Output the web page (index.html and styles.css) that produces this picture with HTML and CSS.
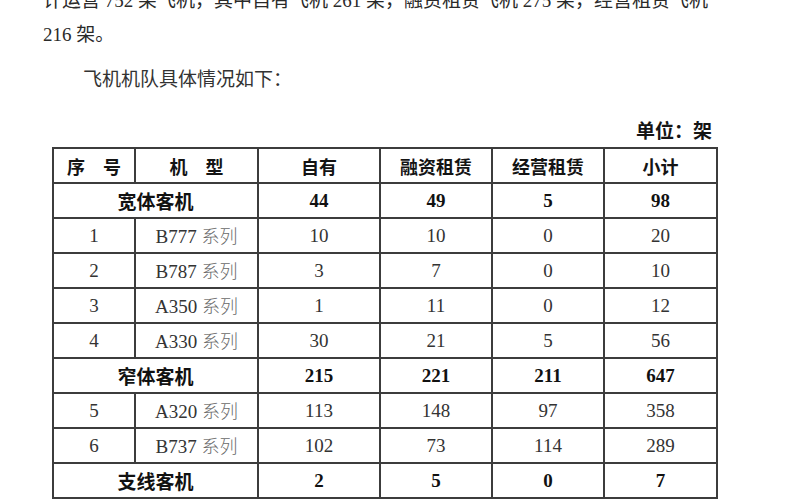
FILE: index.html
```html
<!DOCTYPE html>
<html lang="zh-CN">
<head>
<meta charset="utf-8">
<title>飞机机队具体情况</title>
<link rel="stylesheet" href="styles.css">
</head>
<body>
<div class="page">
  <p class="para intro"><span class="line first">计运营 752 架飞机，其中自有飞机 261 架，融资租赁飞机 275 架，经营租赁飞机</span><span class="line">216 架。</span></p>
  <p class="para indent">飞机机队具体情况如下：</p>
  <p class="unit">单位：架</p>
  <table class="fleet">
    <colgroup>
      <col class="c1"><col class="c2"><col class="c3"><col class="c4"><col class="c5"><col class="c6">
    </colgroup>
    <thead>
      <tr class="head"><th>序　号</th><th>机　型</th><th>自有</th><th>融资租赁</th><th>经营租赁</th><th>小计</th></tr>
    </thead>
    <tbody>
      <tr class="cat"><td colspan="2" class="cjk">宽体客机</td><td>44</td><td>49</td><td>5</td><td>98</td></tr>
      <tr><td>1</td><td>B777 <span class="sr">系列</span></td><td>10</td><td>10</td><td>0</td><td>20</td></tr>
      <tr><td>2</td><td>B787 <span class="sr">系列</span></td><td>3</td><td>7</td><td>0</td><td>10</td></tr>
      <tr><td>3</td><td>A350 <span class="sr">系列</span></td><td>1</td><td>11</td><td>0</td><td>12</td></tr>
      <tr><td>4</td><td>A330 <span class="sr">系列</span></td><td>30</td><td>21</td><td>5</td><td>56</td></tr>
      <tr class="cat"><td colspan="2" class="cjk">窄体客机</td><td>215</td><td>221</td><td>211</td><td>647</td></tr>
      <tr><td>5</td><td>A320 <span class="sr">系列</span></td><td>113</td><td>148</td><td>97</td><td>358</td></tr>
      <tr><td>6</td><td>B737 <span class="sr">系列</span></td><td>102</td><td>73</td><td>114</td><td>289</td></tr>
      <tr class="cat"><td colspan="2" class="cjk">支线客机</td><td>2</td><td>5</td><td>0</td><td>7</td></tr>
    </tbody>
  </table>
</div>
</body>
</html>
```

FILE: styles.css
```css
html, body {
  margin: 0;
  padding: 0;
  background: #ffffff;
}
body {
  width: 800px;
  height: 500px;
  overflow: hidden;
  font-family: "Liberation Serif", "Noto Sans CJK SC", serif;
  color: #2e2e2e;
}
.page {
  padding-left: 43px;
}
.para {
  margin: 0;
  font-size: 19px;
  line-height: 29px;
  color: #2a2a2a;
}
.intro {
  margin-top: -14px;
}
.line {
  display: block;
  white-space: nowrap;
}
.line.first {
  margin-bottom: 5px;
}
.indent {
  margin-top: 16px;
  padding-left: 40px;
  font-size: 19px;
  color: #333;
}
.unit {
  margin: 21px 0 0 0;
  width: 669px;
  text-align: right;
  font-family: "Noto Sans CJK SC", sans-serif;
  font-weight: 700;
  font-size: 19px;
  line-height: 29px;
  color: #151515;
}
.fleet {
  margin-top: 3px;
  margin-left: 9px;
  border-collapse: collapse;
  table-layout: fixed;
  width: 665px;
  font-size: 19px;
}
.c1 { width: 82px; }
.c2 { width: 123px; }
.c3 { width: 122px; }
.c4 { width: 112px; }
.c5 { width: 112px; }
.c6 { width: 113px; }
.fleet tr {
  height: 35px;
}
.fleet th, .fleet td {
  border: 2px solid #3c3c3c;
  padding: 0;
  text-align: center;
  vertical-align: middle;
  line-height: 20px;
}
.fleet th {
  font-family: "Noto Sans CJK SC", sans-serif;
  font-weight: 700;
  font-size: 18px;
  color: #141414;
}
.fleet td {
  color: #333;
}
.sr {
  font-family: "Noto Sans CJK SC", sans-serif;
  font-weight: 300;
  font-size: 18px;
  color: #6a6a6a;
}
.cat td {
  font-weight: 700;
  color: #111;
}
.cat .cjk {
  font-family: "Noto Sans CJK SC", sans-serif;
  font-size: 19px;
}
```
